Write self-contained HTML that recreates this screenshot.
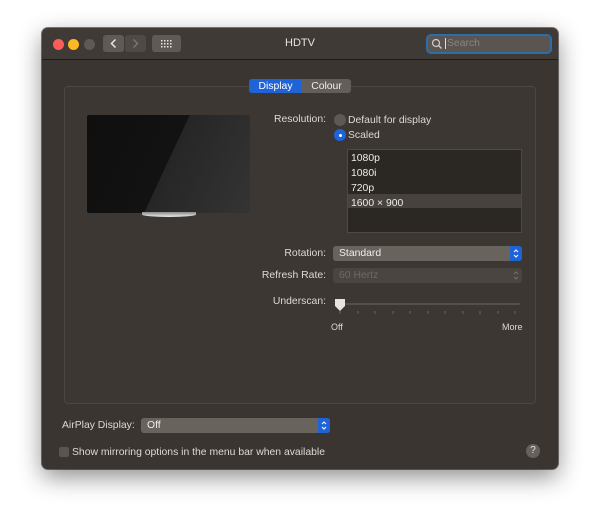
<!DOCTYPE html>
<html><head><meta charset="utf-8"><style>
*{margin:0;padding:0;box-sizing:border-box}
body{width:600px;height:526px;background:#fff;position:relative;overflow:hidden;font-family:"Liberation Sans",sans-serif;font-size:10.4px;color:#dcdad7}
.a{position:absolute}
.win{left:42px;top:28px;width:516px;height:441px;background:#3a3531;border-radius:6px;box-shadow:0 8px 24px rgba(0,0,0,.45),0 0 0 1px rgba(0,0,0,.5);overflow:hidden}
.tb{left:0;top:0;width:516px;height:32px;background:#3f3a36;border-bottom:1px solid #1e1b19}
.lbl{text-align:right;width:120px}
.pop{background:#69635e;border-radius:3px;height:15px;line-height:16px;padding-left:6px;color:#f0eeec}
.step{position:absolute;right:0;top:0;width:12px;height:15px;background:#1f63d8;border-radius:0 3px 3px 0}
</style></head><body>
<div class="a win">
 <div class="a tb">
  <div class="a" style="left:11px;top:11px;width:11px;height:11px;border-radius:50%;background:#fe5c56"></div>
  <div class="a" style="left:26px;top:11px;width:11px;height:11px;border-radius:50%;background:#fdb827"></div>
  <div class="a" style="left:42px;top:11px;width:11px;height:11px;border-radius:50%;background:#5d5956"></div>
  <div class="a" style="left:61px;top:7px;width:21px;height:17px;background:#5f5a56;border-radius:3px"></div>
  <svg class="a" style="left:61px;top:7px" width="21" height="17"><path d="M12.5 4.5 L8.5 8.5 L12.5 12.5" stroke="#e8e6e4" stroke-width="1.5" fill="none"/></svg>
  <div class="a" style="left:83px;top:7px;width:21px;height:17px;background:#4f4a46;border-radius:3px"></div>
  <svg class="a" style="left:83px;top:7px" width="21" height="17"><path d="M8.5 4.5 L12.5 8.5 L8.5 12.5" stroke="#7a7571" stroke-width="1.5" fill="none"/></svg>
  <div class="a" style="left:110px;top:7px;width:29px;height:17px;background:#5f5a56;border-radius:3px"></div>
  <svg class="a" style="left:110px;top:7px" width="29" height="17">
   <g fill="#e8e6e4">
    <rect x="9" y="5" width="1.5" height="1.5"/><rect x="12" y="5" width="1.5" height="1.5"/><rect x="15" y="5" width="1.5" height="1.5"/><rect x="18" y="5" width="1.5" height="1.5"/>
    <rect x="9" y="8" width="1.5" height="1.5"/><rect x="12" y="8" width="1.5" height="1.5"/><rect x="15" y="8" width="1.5" height="1.5"/><rect x="18" y="8" width="1.5" height="1.5"/>
    <rect x="9" y="11" width="1.5" height="1.5"/><rect x="12" y="11" width="1.5" height="1.5"/><rect x="15" y="11" width="1.5" height="1.5"/><rect x="18" y="11" width="1.5" height="1.5"/>
   </g></svg>
  <div class="a" style="left:0;width:516px;top:9px;text-align:center;font-size:11px;color:#e6e4e2">HDTV</div>
  <div class="a" style="left:384px;top:6px;width:126px;height:20px;border:2.5px solid #2d6ea8;border-radius:5px;background:#5a5551"></div>
  <svg class="a" style="left:389px;top:10px" width="12" height="12"><circle cx="5" cy="5" r="3.5" stroke="#cfcdca" stroke-width="1.2" fill="none"/><path d="M7.5 7.5 L10.5 10.5" stroke="#cfcdca" stroke-width="1.3"/></svg>
  <div class="a" style="left:403px;top:10px;width:1px;height:11px;background:#ddd"></div>
  <div class="a" style="left:405px;top:10px;color:#8a8581">Search</div>
 </div>
 <div class="a" style="left:22px;top:58px;width:472px;height:318px;border:1px solid #4c4743;border-radius:4px;background:#3c3733"></div>
 <div class="a" style="left:207px;top:51px;width:53px;height:14px;background:#1f63d8;border-radius:3px 0 0 3px;text-align:center;line-height:15px;color:#fff">Display</div>
 <div class="a" style="left:260px;top:51px;width:49px;height:14px;background:#635e5a;border-radius:0 3px 3px 0;text-align:center;line-height:15px;color:#eee">Colour</div>
 <div class="a" style="left:45px;top:87px;width:163px;height:98px;border-radius:2px;background:linear-gradient(115deg,#0f0f0f 0%,#121212 49%,#262626 49.5%,#343434 100%)"></div>
 <div class="a" style="left:100px;top:184px;width:54px;height:5px;border-radius:0 0 50% 50%;background:linear-gradient(#888,#eee);"></div>
 <div class="a lbl" style="left:164px;top:86px">Resolution:</div>
 <div class="a" style="left:292px;top:86px;width:12px;height:12px;border-radius:50%;background:#5e5955"></div>
 <div class="a" style="left:306px;top:87px">Default for display</div>
 <div class="a" style="left:292px;top:101px;width:12px;height:12px;border-radius:50%;background:#1f63d8"></div>
 <div class="a" style="left:296.5px;top:105.5px;width:3px;height:3px;border-radius:50%;background:#fff"></div>
 <div class="a" style="left:306px;top:102px">Scaled</div>
 <div class="a" style="left:305px;top:121px;width:175px;height:84px;background:#2b2723;border:1px solid #4e4945"></div>
 <div class="a" style="left:306px;top:166px;width:173px;height:14px;background:#47423e"></div>
 <div class="a" style="left:309px;top:123px;line-height:15px;color:#eeecea">1080p<br>1080i<br>720p<br>1600 × 900</div>
 <div class="a lbl" style="left:164px;top:220px">Rotation:</div>
 <div class="a pop" style="left:291px;top:218px;width:189px">Standard<div class="step"><svg width="12" height="15"><path d="M4 6 L6 4 L8 6 M4 9 L6 11 L8 9" stroke="#fff" stroke-width="1" fill="none"/></svg></div></div>
 <div class="a lbl" style="left:164px;top:242px">Refresh Rate:</div>
 <div class="a pop" style="left:291px;top:240px;width:189px;background:#4a4541;color:#6f6a66">60 Hertz<svg class="a" style="right:0;top:0" width="12" height="15"><path d="M4 6 L6 4 L8 6 M4 9 L6 11 L8 9" stroke="#75706c" stroke-width="1" fill="none"/></svg></div>
 <div class="a lbl" style="left:164px;top:268px">Underscan:</div>
 <div class="a" style="left:298px;top:275px;width:180px;height:2px;background:#55504c;border-radius:1px"></div>
 <svg class="a" style="left:292px;top:270px" width="12" height="14"><path d="M1 1 H11 V8 L6 13 L1 8 Z" fill="#e6e4e2"/></svg>
 <svg class="a" style="left:296px;top:282px" width="186" height="6"><g stroke="#6a6561" stroke-width="1">
  <path d="M2 1v3M20 1v3M37 1v3M55 1v3M72 1v3M90 1v3M107 1v3M125 1v3M142 1v3M160 1v3M177 1v3"/></g></svg>
 <div class="a" style="left:289px;top:294px;font-size:9px">Off</div>
 <div class="a" style="left:460px;top:294px;font-size:9px">More</div>
 <div class="a" style="left:20px;top:392px">AirPlay Display:</div>
 <div class="a pop" style="left:99px;top:390px;width:189px">Off<div class="step"><svg width="12" height="15"><path d="M4 6 L6 4 L8 6 M4 9 L6 11 L8 9" stroke="#fff" stroke-width="1" fill="none"/></svg></div></div>
 <div class="a" style="left:17px;top:419px;width:10px;height:10px;border-radius:2px;background:#5a5551"></div>
 <div class="a" style="left:30px;top:419px">Show mirroring options in the menu bar when available</div>
 <div class="a" style="left:484px;top:416px;width:14px;height:14px;border-radius:50%;background:#66615d;text-align:center;line-height:14px;font-size:10px;color:#e6e4e2">?</div>
</div>
</body></html>
